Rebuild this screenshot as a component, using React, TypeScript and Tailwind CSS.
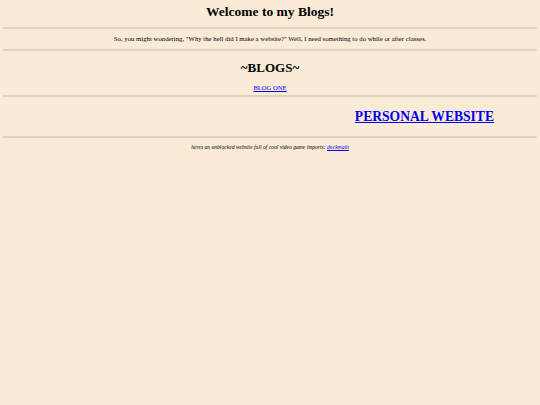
import React from "react";

const Rule = () => <div className="mx-[3px] border-t-2 border-[#ddd4c7]" />;

const App = () => {
  return (
    <div className="min-h-screen w-full bg-[#faebd7] font-['Liberation_Serif',serif] text-black">
      <h1 className="pt-[4px] pb-[7px] text-center text-[13.5px] font-bold leading-[16px]">
        Welcome to my Blogs!
      </h1>
      <Rule />
      <p className="pt-[6px] pb-[6px] text-center text-[6.75px] leading-[8px]">
        So, you might wondering, "Why the hell did I make a website?" Well, I need something to do while or after classes.
      </p>
      <Rule />
      <h2 className="pt-[9px] pb-[8px] text-center text-[13px] font-bold leading-[16px]">~BLOGS~</h2>
      <div className="pb-[3px] text-center text-[6.6px] leading-[8px]">
        <a href="#" className="text-[#0000ee] underline">
          BLOG ONE
        </a>
      </div>
      <Rule />
      <div className="flex justify-end pr-[46px] pt-[12px] pb-[11px]">
        <a href="#" className="text-[13.6px] font-bold leading-[16px] text-[#0000ee] underline">
          PERSONAL WEBSITE
        </a>
      </div>
      <Rule />
      <p className="pt-[6px] text-center text-[5.6px] italic leading-[7px]">
        heres an unblocked website full of cool video game imports:{" "}
        <a href="#" className="text-[#0000ee] underline">
          duckmath
        </a>
      </p>
    </div>
  );
};

export default App;
